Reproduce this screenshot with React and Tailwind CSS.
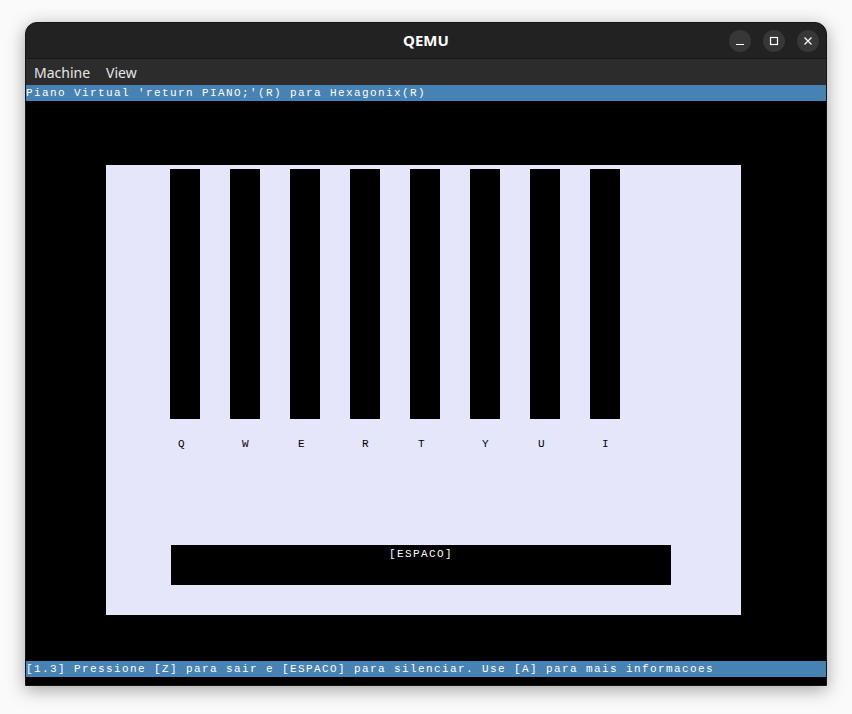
import React from "react";

const keys = ["Q", "W", "E", "R", "T", "Y", "U", "I"];

const pixel = { fontFamily: '"Liberation Mono", "DejaVu Sans Mono", monospace' };

function WinButton({ children }) {
  return (
    <div className="w-[22px] h-[22px] rounded-full bg-[#373737] flex items-center justify-center">
      {children}
    </div>
  );
}

export default function App() {
  return (
    <div className="w-[852px] h-[714px] bg-[#fafafa] pt-[22px] pl-[25px]">
      <div
        className="w-[802px] rounded-t-[12px] overflow-hidden bg-[#222222] border border-[#151515] shadow-[0_4px_18px_rgba(0,0,0,0.35)]"
        style={{ fontFamily: '"Noto Sans", "Open Sans", sans-serif' }}
      >
        {/* title bar */}
        <div className="relative h-[36px] flex items-center justify-center border-b border-[#181818]">
          <span className="text-[15px] font-bold text-white">QEMU</span>
          <div className="absolute right-[7px] top-[7px] flex gap-[12px]">
            <WinButton>
              <svg width="10" height="10" viewBox="0 0 10 10">
                <path d="M1 8.5h8" stroke="#fff" strokeWidth="1.2" />
              </svg>
            </WinButton>
            <WinButton>
              <svg width="10" height="10" viewBox="0 0 10 10">
                <rect x="1.5" y="1.5" width="7" height="7" fill="none" stroke="#fff" strokeWidth="1.2" />
              </svg>
            </WinButton>
            <WinButton>
              <svg width="10" height="10" viewBox="0 0 10 10">
                <path d="M1.5 1.5l7 7M8.5 1.5l-7 7" stroke="#fff" strokeWidth="1.2" />
              </svg>
            </WinButton>
          </div>
        </div>

        {/* menu bar */}
        <div className="h-[26px] bg-[#2c2c2c] flex items-center pl-[8px] gap-[16px] text-[14px] text-[#e6e6e6]">
          <span>Machine</span>
          <span>View</span>
        </div>

        {/* guest screen */}
        <div className="w-[800px] h-[600px] bg-black flex flex-col text-white text-[11px] tracking-[1.4px] leading-[16px]" style={pixel}>
          <div className="h-[16px] bg-[#4682b4] whitespace-pre">Piano Virtual 'return PIANO;'(R) para Hexagonix(R)</div>

          <div className="flex-1 pt-[64px] pl-[80px]">
            <div className="w-[635px] h-[450px] bg-[#e6e6fa] pt-[4px] pl-[64px] flex flex-col">
              <div className="flex gap-[30px]">
                {keys.map((k) => (
                  <div key={k} className="w-[30px] h-[250px] bg-black" />
                ))}
              </div>
              <div className="flex text-black mt-[17px] -ml-[64px] h-[16px]">
                <span className="w-[8px] ml-[72px]">Q</span>
                <span className="w-[8px] ml-[56px]">W</span>
                <span className="w-[8px] ml-[48px]">E</span>
                <span className="w-[8px] ml-[56px]">R</span>
                <span className="w-[8px] ml-[48px]">T</span>
                <span className="w-[8px] ml-[56px]">Y</span>
                <span className="w-[8px] ml-[48px]">U</span>
                <span className="w-[8px] ml-[56px]">I</span>
              </div>
              <div className="mt-[93px] ml-[1px] w-[500px] h-[40px] bg-black pt-[1px] text-center">[ESPACO]</div>
            </div>
          </div>

          <div className="h-[16px] bg-[#4682b4] whitespace-pre mb-[8px]">[1.3] Pressione [Z] para sair e [ESPACO] para silenciar. Use [A] para mais informacoes</div>
        </div>
      </div>
    </div>
  );
}
